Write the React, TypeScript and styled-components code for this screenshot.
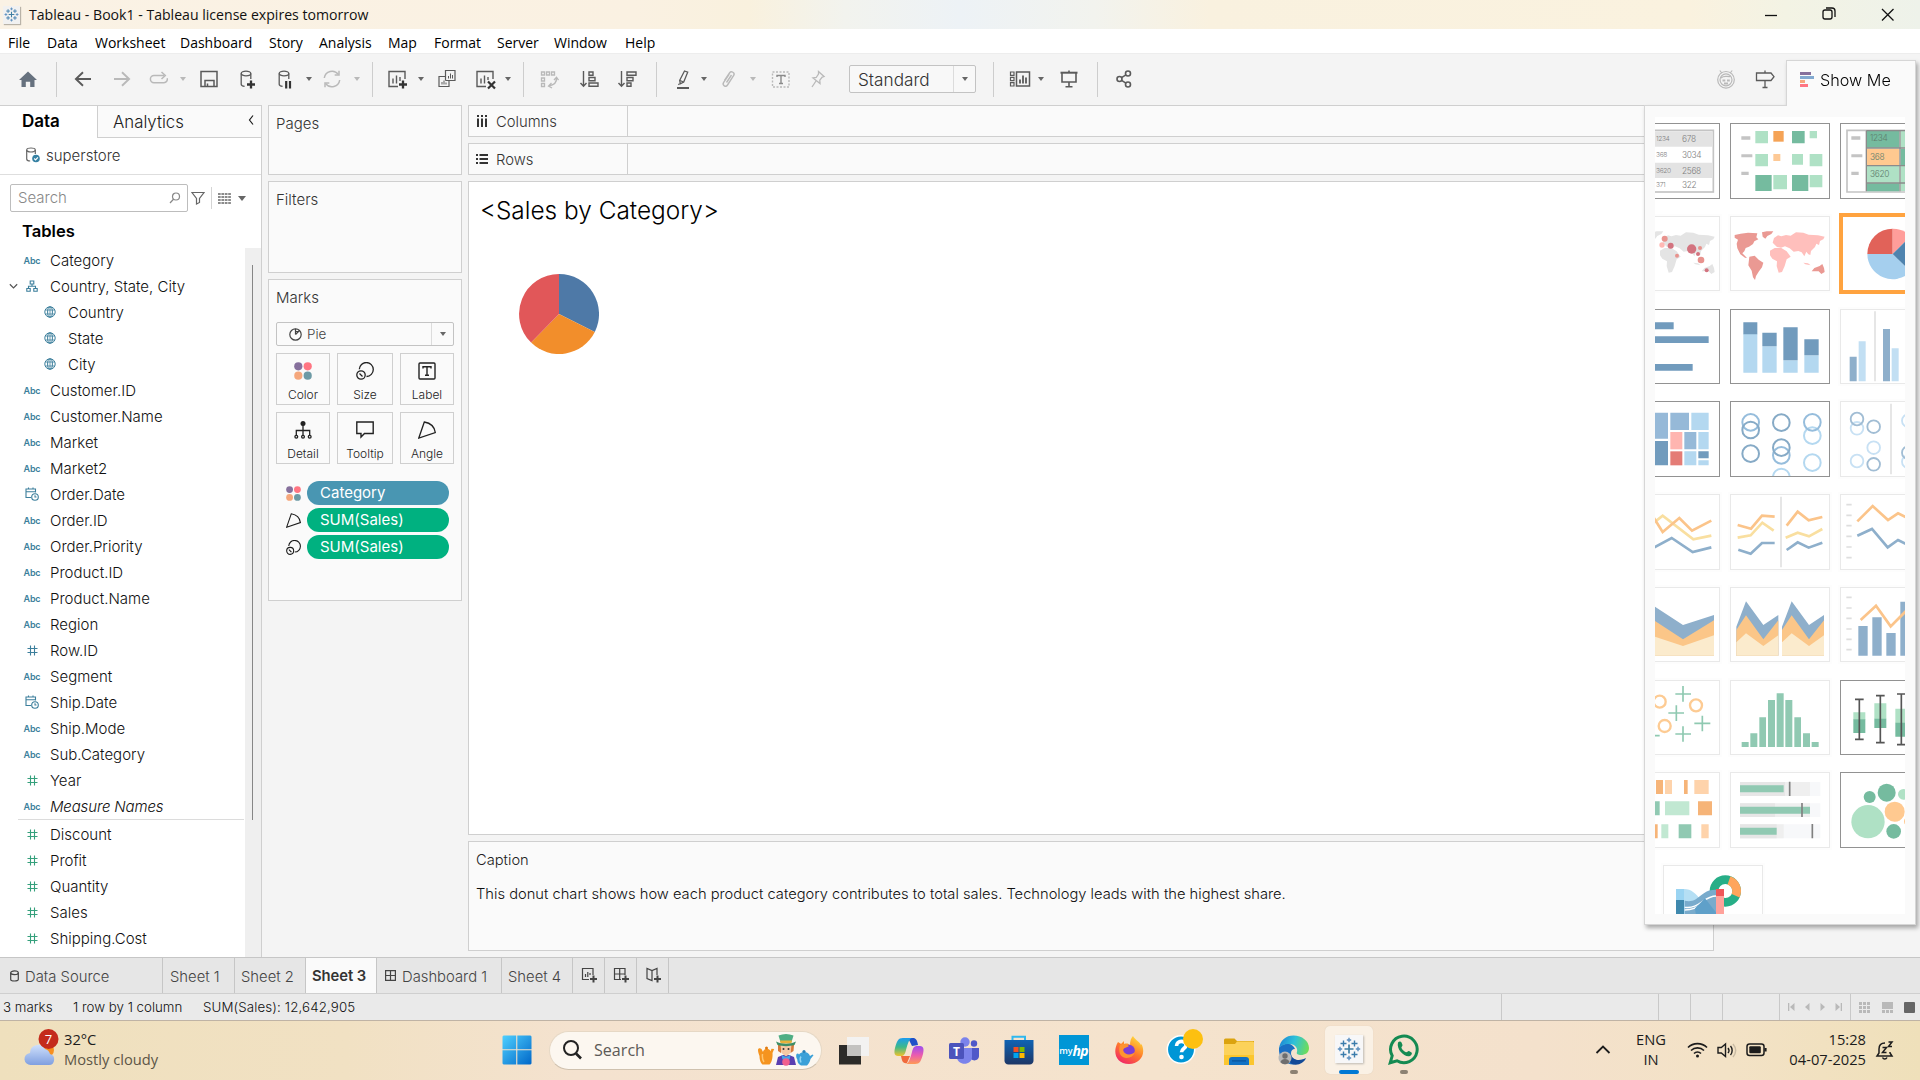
import React from "react";
import styled, { createGlobalStyle, css } from "styled-components";

const LINE = "#cfcfcf";
const APP_FONT = `Inter, "Open Sans", sans-serif`;
const OS_FONT = `"Open Sans", "Noto Sans", sans-serif`;

const GlobalStyle = createGlobalStyle`
  * { box-sizing: border-box; }
  body { margin: 0; background: #f4f4f4; overflow: hidden; }
  svg { display: block; flex: none; }
`;

/* ---------- Frame ---------- */

const Screen = styled.div`
  position: relative;
  width: 1920px;
  height: 1080px;
  display: flex;
  flex-direction: column;
  background: #f4f4f4;
  color: #1b1b1b;
  font-family: ${APP_FONT};
  font-weight: 300;
  white-space: nowrap;
  overflow: hidden;
`;

const TitleBar = styled.header`
  height: 29px;
  flex: none;
  display: flex;
  align-items: center;
  padding-left: 3px;
  background: linear-gradient(90deg, #faf2e5 0%, #faf1e2 33%, #f9f1de 39%, #f2f3ee 44%, #edf2f6 50%, #f2f3ee 57%, #f9f1df 63%, #faf2df 88%, #f3f3e4 93%, #eef2ea 100%);
  font-family: ${OS_FONT};
  font-weight: 400;
  font-size: 14.1px;
  color: #111;
`;

const AppBadge = styled.span`
  width: 17px;
  height: 18px;
  display: grid;
  place-items: center;
  margin-right: 9px;
  background: #f1f1f1;
  box-shadow: 1px 1px 1px #b9b3a8;
`;

const WindowButtons = styled.div`
  display: flex;
  margin-left: auto;
  padding-right: 20px;
  gap: 34px;
`;

const MenuBar = styled.nav`
  height: 25px;
  flex: none;
  display: flex;
  align-items: center;
  padding: 2px 0 0 8px;
  background: #fff;
  border-bottom: 1px solid #ededed;
  font-family: ${OS_FONT};
  font-weight: 400;
  font-size: 14px;
  color: #000;
`;

const MenuItem = styled.span<{ $w: number }>`
  width: ${(p) => p.$w}px;
`;

/* ---------- Toolbar ---------- */

const ToolBar = styled.div`
  height: 51px;
  flex: none;
  display: flex;
  align-items: center;
  padding: 0 143px 1px 0;
`;

const Tool = styled.span<{ $ml: number; $muted?: boolean }>`
  display: grid;
  place-items: center;
  width: 24px;
  height: 24px;
  flex: none;
  margin-left: ${(p) => p.$ml}px;
  color: ${(p) => (p.$muted ? "#b9b9b9" : "#5a5a5a")};
`;

const Caret = styled.span<{ $ml?: number; $muted?: boolean; $big?: boolean }>`
  width: 0;
  height: 0;
  flex: none;
  margin: 0 ${(p) => (p.$big ? 0 : 1)}px 0 ${(p) => (p.$ml ?? 0) + 1}px;
  border: ${(p) => (p.$big ? 4 : 3)}px solid transparent;
  border-top: ${(p) => (p.$big ? 5 : 4)}px solid ${(p) => (p.$muted ? "#b9b9b9" : "#666")};
  border-bottom: 0;
`;

const ToolDivider = styled.span<{ $ml: number }>`
  width: 1px;
  height: 35px;
  flex: none;
  margin-left: ${(p) => p.$ml}px;
  background: #cdcdcd;
`;

const FitSelect = styled.div`
  display: flex;
  align-items: center;
  width: 127px;
  height: 28px;
  flex: none;
  margin-left: 20px;
  padding-left: 8px;
  border: 1px solid #c3c3c3;
  border-radius: 2px;
  background: #f8f8f8;
  font-size: 17.2px;
  color: #333;
`;

const SelectArrow = styled.span<{ $w: number }>`
  display: grid;
  place-items: center;
  width: ${(p) => p.$w}px;
  height: 100%;
  margin-left: auto;
  border-left: 1px solid #dcdcdc;
`;

const ToolSpacer = styled.span`
  flex: 1;
`;

/* ---------- Work area ---------- */

const Work = styled.div`
  height: 852px;
  flex: none;
  display: flex;
`;

const DataPane = styled.aside`
  width: 262px;
  display: flex;
  flex-direction: column;
  background: #fff;
  border-top: 1px solid ${LINE};
  border-right: 1px solid ${LINE};
`;

const PaneTabs = styled.div`
  height: 32px;
  flex: none;
  display: flex;
`;

const DataTab = styled.div`
  width: 97px;
  padding: 3px 0 0 22px;
  font-size: 17px;
  font-weight: 600;
  line-height: 24px;
  color: #000;
`;

const AnalyticsTab = styled.div`
  flex: 1;
  display: flex;
  justify-content: space-between;
  padding: 4px 5px 0 15px;
  border-left: 1px solid ${LINE};
  border-bottom: 1px solid ${LINE};
  background: #fafafa;
  font-size: 16.8px;
  line-height: 24px;
  svg { margin-top: 5px; }
`;

const SourceRow = styled.div`
  height: 37px;
  flex: none;
  display: flex;
  align-items: center;
  gap: 5px;
  padding: 0 0 2px 26px;
  border-bottom: 1px solid #dedede;
  font-size: 15px;
  color: #333;
`;

const SearchRow = styled.div`
  display: flex;
  align-items: center;
  height: 28px;
  flex: none;
  margin-top: 9px;
  padding-left: 10px;
`;

const SearchField = styled.div`
  display: flex;
  align-items: center;
  justify-content: space-between;
  width: 178px;
  height: 28px;
  padding: 0 6px 1px 7px;
  border: 1px solid #bdbdbd;
  border-radius: 2px;
  font-size: 15px;
  color: #888;
`;

const SearchTools = styled.div`
  display: flex;
  align-items: center;
  gap: 6px;
  padding-left: 3px;
  color: #666;
`;

const ThinRule = styled.span`
  width: 1px;
  height: 22px;
  background: #d4d4d4;
`;

const TablesTitle = styled.h2`
  height: 36px;
  flex: none;
  margin: 0;
  padding: 7px 0 0 22px;
  font-size: 16.6px;
  font-weight: 600;
  line-height: 24px;
  color: #000;
`;

const ListArea = styled.div`
  flex: 1;
  display: flex;
  min-height: 0;
`;

const FieldList = styled.div`
  width: 245px;
  overflow: hidden;
`;

const ScrollTrack = styled.div`
  flex: 1;
  padding: 17px 0 0 7px;
  background: #efefef;
`;

const ScrollThumb = styled.div`
  width: 1px;
  height: 555px;
  background: #868686;
`;

const FieldRow = styled.div<{ $nested?: boolean; $italic?: boolean }>`
  display: flex;
  align-items: center;
  height: 26px;
  padding: 0 0 2px ${(p) => (p.$nested ? 26 : 8)}px;
  font-size: 15px;
  font-style: ${(p) => (p.$italic ? "italic" : "normal")};
  letter-spacing: ${(p) => (p.$italic ? "-0.15px" : "0")};
  color: #111;
`;

const Expander = styled.span`
  width: 14px;
  color: #555;
`;

const FieldIcon = styled.span<{ $measure?: boolean }>`
  display: flex;
  justify-content: center;
  width: 20px;
  margin-right: 8px;
  font-size: 9px;
  font-weight: 600;
  font-style: normal;
  letter-spacing: -0.2px;
  color: ${(p) => (p.$measure ? "#35a07c" : "#3c7f9c")};
`;

const FieldRule = styled.div`
  height: 1px;
  margin: -1px 1px 2px 18px;
  background: #dcdcdc;
`;

/* ---------- Cards ---------- */

const CardColumn = styled.div`
  display: flex;
  flex-direction: column;
  gap: 6px;
  width: 194px;
  margin-left: 6px;
`;

const Card = styled.section<{ $h: number }>`
  height: ${(p) => p.$h}px;
  padding: 0 7px;
  border: 1px solid ${LINE};
  background: #fafafa;
`;

const CardTitle = styled.div`
  padding-top: 6px;
  font-size: 15px;
  line-height: 24px;
  color: #333;
`;

const MarkSelect = styled.div`
  display: flex;
  align-items: center;
  gap: 5px;
  height: 24px;
  margin-top: 12px;
  padding-left: 12px;
  border: 1px solid #c3c3c3;
  border-radius: 2px;
  font-size: 13.4px;
  color: #444;
`;

const MarkGrid = styled.div`
  display: grid;
  grid-template-columns: 54px 56px 54px;
  grid-auto-rows: 52px;
  gap: 7px;
  margin-top: 7px;
`;

const MarkButton = styled.div`
  display: flex;
  flex-direction: column;
  align-items: center;
  justify-content: space-between;
  padding: 8px 0 1px;
  border: 1px solid ${LINE};
  font-size: 12px;
  line-height: 17px;
  color: #222;
`;

const PillList = styled.div`
  display: flex;
  flex-direction: column;
  gap: 3px;
  margin-top: 17px;
`;

const PillRow = styled.div`
  display: flex;
  align-items: center;
  gap: 6px;
  padding-left: 10px;
`;

const Pill = styled.span<{ $measure?: boolean }>`
  width: 142px;
  height: 24px;
  padding-left: 13px;
  border-radius: 12px;
  background: ${(p) => (p.$measure ? "#00b180" : "#4996b2")};
  font-size: 15px;
  font-weight: 400;
  line-height: 23px;
  color: #fff;
`;

/* ---------- Sheet ---------- */

const SheetColumn = styled.main`
  display: flex;
  flex-direction: column;
  gap: 6px;
  width: 1246px;
  margin-left: 6px;
`;

const Shelf = styled.div`
  display: flex;
  height: 32px;
  border: 1px solid ${LINE};
  background: #fafafa;
`;

const ShelfLabel = styled.div`
  display: flex;
  align-items: center;
  gap: 8px;
  width: 159px;
  padding: 2px 0 0 7px;
  border-right: 1px solid ${LINE};
  font-size: 14.8px;
  color: #333;
  svg { margin-top: -2px; }
`;

const Canvas = styled.div`
  height: 654px;
  padding: 13px 0 0 11px;
  border: 1px solid ${LINE};
  background: #fff;
`;

const SheetTitle = styled.h1`
  margin: 0 0 49px;
  font-size: 24.4px;
  font-weight: 300;
  line-height: 30px;
  color: #000;
`;

const PieHolder = styled.div`
  padding-left: 39px;
`;

const Caption = styled.div`
  height: 110px;
  padding: 6px 7px;
  border: 1px solid ${LINE};
  background: #fafafa;
  font-size: 14.7px;
  line-height: 24px;
  color: #222;
`;

const CaptionText = styled.p`
  margin: 10px 0 0;
  color: #111;
`;

/* ---------- Show Me ---------- */

const ShowMe = styled.div`
  position: absolute;
  top: 60px;
  right: 4px;
  display: flex;
  flex-direction: column;
  align-items: flex-end;
  filter: drop-shadow(2px 3px 2px rgba(0, 0, 0, 0.32));
`;

const ShowMeTab = styled.div`
  z-index: 1;
  display: flex;
  align-items: center;
  gap: 6px;
  width: 130px;
  height: 46px;
  margin-bottom: -1px;
  padding: 0 0 8px 13px;
  border: 1px solid #d6d6d6;
  border-bottom: 0;
  background: #fafafa;
  font-size: 16.2px;
  color: #000;
`;

const ShowMeBody = styled.div`
  width: 272px;
  height: 820px;
  padding: 11px 0 0 10px;
  border: 1px solid #d6d6d6;
  background: #fafafa;
`;

const ShowMeView = styled.div`
  width: 250px;
  height: 797px;
  overflow: hidden;
  background: #fff;
`;

const TileGrid = styled.div`
  display: grid;
  grid-template-columns: repeat(3, 100px);
  grid-auto-rows: 75.5px;
  gap: 17.25px 10px;
  width: 320px;
  margin: 6px 0 17.25px -35px;
`;

const Tile = styled.div<{ $state: "on" | "off" | "picked" }>`
  overflow: hidden;
  border: 1px solid ${(p) => (p.$state === "on" ? "#929292" : "#e9e9e9")};
  ${(p) =>
    p.$state === "off" &&
    css`
      box-shadow: 0 0 0 2px #fdfdfd;
    `}
  ${(p) =>
    p.$state === "picked" &&
    css`
      margin: -3px -1px;
      padding: 0;
      border: 4px solid #ffa33f;
    `}
  svg { margin: ${(p) => (p.$state === "picked" ? "-1px 0 0 -3px" : "-1px 0 0 -1px")}; }
`;

const MoreTile = styled(Tile)`
  width: 100px;
  height: 76px;
  margin-left: 8px;
`;

/* ---------- Sheet tabs and status ---------- */

const SheetTabs = styled.div`
  height: 37px;
  flex: none;
  display: flex;
  border-top: 1px solid #c6c6c6;
  border-bottom: 1px solid #cfcfcf;
  background: #e6e6e6;
`;

const SheetTab = styled.div<{ $w: number; $active?: boolean; $pad?: number }>`
  display: flex;
  align-items: center;
  gap: 6px;
  width: ${(p) => p.$w}px;
  padding: ${(p) => (p.$active ? 0 : 2)}px 0 0 ${(p) => p.$pad ?? 6}px;
  border-right: 1px solid #c6c6c6;
  background: ${(p) => (p.$active ? "#fafafa" : "transparent")};
  font-size: 14.8px;
  font-weight: ${(p) => (p.$active ? 600 : 300)};
  letter-spacing: ${(p) => (p.$active ? "-0.05px" : "0")};
  color: ${(p) => (p.$active ? "#333" : "#444")};
  svg { margin-top: -2px; }
`;

const StatusBar = styled.div`
  height: 26px;
  flex: none;
  display: flex;
  align-items: center;
  padding-left: 3px;
  background: #eaeaea;
  font-size: 13.3px;
  color: #111;
`;

const StatusItem = styled.span<{ $w: number; $wide?: boolean }>`
  width: ${(p) => p.$w}px;
  letter-spacing: ${(p) => (p.$wide ? "0.13px" : "0")};
`;

const StatusCells = styled.div`
  display: flex;
  height: 100%;
  margin-left: auto;
`;

const StatusCell = styled.div<{ $w: number }>`
  display: flex;
  align-items: center;
  justify-content: space-around;
  width: ${(p) => p.$w}px;
  padding: 0 3px;
  border-left: 1px solid #c9c9c9;
  color: #b9b9b9;
`;

const ViewModes = styled(StatusCell)`
  justify-content: space-between;
  padding: 0 5px 0 8px;
`;

/* ---------- Taskbar ---------- */

const Taskbar = styled.footer`
  height: 60px;
  flex: none;
  display: flex;
  align-items: center;
  padding-bottom: 1px;
  border-top: 1px solid #bfb3a5;
  background: linear-gradient(90deg, #efe0bd 0%, #f1e1c3 18%, #f4e2cf 30%, #f5e3cd 60%, #f4e1cc 80%, #f3e2c6 90%, #efe0ba 100%);
  font-family: ${OS_FONT};
  font-weight: 400;
  font-size: 14.7px;
  color: #1c1c1c;
`;

const Weather = styled.div`
  display: flex;
  align-items: center;
  gap: 5px;
  width: 502px;
  padding: 0 0 3px 23px;
  line-height: 20px;
`;

const Muted = styled.div`
  color: #5d5647;
`;

const TaskSearch = styled.div`
  display: flex;
  align-items: center;
  width: 273px;
  height: 39px;
  margin: 0 5px 0 17px;
  padding: 0 7px 0 13px;
  border: 1px solid #e6d8c5;
  border-bottom-color: #cfc1ae;
  border-radius: 20px;
  background: #fcf7f0;
  font-size: 16.1px;
  color: #5c5a57;
`;

const SearchWord = styled.span`
  margin: 0 auto 0 12px;
`;

const TaskCell = styled.div<{ $mark?: "idle" | "active" }>`
  display: flex;
  flex-direction: column;
  align-items: center;
  justify-content: flex-end;
  gap: ${(p) => (p.$mark ? 5 : 0)}px;
  width: 55px;
  height: 48px;
  margin-left: ${(p) => (p.$mark === "active" ? 0 : 0)}px;
  padding-bottom: ${(p) => (p.$mark ? 0 : 9)}px;
`;

const Apps = styled.div`
  display: flex;
  margin-left: -1px;
`;

const ActivePlate = styled.div`
  display: flex;
  flex-direction: column;
  align-items: center;
  gap: 7px;
  width: 48px;
  height: 48px;
  padding-top: 9px;
  border-radius: 5px;
  background: #faf1e5;
  box-shadow: 0 0 1px #d8c8b3;
`;

const LogoPlate = styled.div`
  display: grid;
  place-items: center;
  width: 28px;
  height: 28px;
  background: #f7f7f8;
  box-shadow: 1px 1px 2px #bdb9b2;
`;

const RunMark = styled.span<{ $active?: boolean }>`
  width: ${(p) => (p.$active ? 20 : 8)}px;
  height: 4px;
  border-radius: 2px;
  background: ${(p) => (p.$active ? "#0078d4" : "#8c8173")};
`;

const HpPlate = styled.div`
  display: flex;
  align-items: center;
  justify-content: center;
  width: 30px;
  height: 30px;
  background: #0096d6;
  font-size: 9px;
  font-weight: 600;
  color: #fff;
  i { font-size: 14px; font-weight: 700; letter-spacing: -0.8px; }
`;

const Tray = styled.div`
  display: flex;
  align-items: center;
  margin-left: auto;
  padding-right: 25px;
  line-height: 20px;
`;

const Language = styled.div`
  width: 48px;
  margin: 0 12px 3px 16px;
  text-align: center;
`;

const TrayIcons = styled.div`
  display: flex;
  align-items: center;
  gap: 9px;
  padding-bottom: 1px;
`;

const Clock = styled.div`
  width: 99px;
  margin: 0 9px 3px 0;
  text-align: right;
`;

/* ---------- Icons ---------- */

const Line: React.FC<{ s?: number; h?: number; w?: number; children: React.ReactNode; v?: string }> = ({ s = 24, h, w = 1.5, children, v }) => (
  <svg width={s} height={h ?? s} viewBox={v ?? "0 0 24 24"} fill="none" stroke="currentColor" strokeWidth={w}>
    {children}
  </svg>
);

const TableauMark = ({ size }: { size: number }) => (
  <svg width={size} height={size} viewBox="0 0 24 24" fill="none" strokeWidth="1.4">
    <path d="M12 7.5v9M7.5 12h9" stroke="#3f7fa3" strokeWidth="1.7" />
    <path d="M6.5 3.5v6M3.5 6.5h6M17.5 3.5v6M14.5 6.5h6M6.5 14.5v6M3.5 17.5h6M17.5 14.5v6M14.5 17.5h6" stroke="#3b7cab" />
    <path d="M12 .8v4.4M9.8 3h4.4M12 18.8v4.4M9.8 21h4.4M3 9.8v4.4M.8 12h4.4M21 9.8v4.4M18.8 12h4.4" stroke="#5b8fbf" />
  </svg>
);

const HomeIcon = () => (
  <svg width="24" height="24" viewBox="0 0 24 24" fill="#66717e"><path d="M12 4.5l9 8.5h-2.5v7h-4.3v-5.2H9.8V20H5.5v-7H3z" /></svg>
);
const BackIcon = () => <Line w={1.9}><path d="M20 12H5M12 5.3L4.9 12l7.1 6.7" /></Line>;
const ForwardIcon = () => <Line w={1.9}><path d="M4 12h15M12 5.3l7.1 6.7-7.1 6.7" /></Line>;
const ReplayIcon = () => (
  <Line><path d="M17 8.5H7a3.6 3.6 0 0 0 0 7.2h10a3.4 3.4 0 0 0 3.2-4.4" /><path d="M14.5 5l3.8 3.5-3.8 3.5" /></Line>
);
const SaveIcon = () => <Line><path d="M4 4.5h16v15H4z" /><path d="M8 19.5v-6h9v6M10.5 16.5v3" /></Line>;
const Cylinder = () => (
  <><ellipse cx="10" cy="6.5" rx="4.8" ry="2.3" /><path d="M5.2 6.5v10.7c0 1 1.4 1.9 3.4 2.2M14.8 6.5V12" /></>
);
const AddDataIcon = () => <Line w={1.3}><Cylinder /><path d="M15 13.5v8M11 17.5h8" stroke="#333" strokeWidth="2.3" /></Line>;
const PauseDataIcon = () => <Line w={1.3}><Cylinder /><path d="M12.2 14v7.5M16 14v7.5" stroke="#333" strokeWidth="2.2" /></Line>;
const RefreshIcon = () => (
  <Line><path d="M4.3 11a7.8 7.8 0 0 1 14-3.6M19.7 13a7.8 7.8 0 0 1-14 3.6" /><path d="M19 3.8V8h-4.3M5 20.2V16h4.3" /></Line>
);
const NewSheetIcon = () => (
  <Line w={1.4}><path d="M20 12V4.5H4v15h9" /><path d="M8 16.5v-5M11.5 16.5v-8M15 14v-4" /><path d="M18 13.5v8M14 17.500h8" stroke="#333" strokeWidth="2.3" /></Line>
);
const DuplicateIcon = () => (
  <Line w={1.2}><path d="M10.5 13.500v-10H20v10h-9.500M10.500 9.500H4v10h10v-6" /><path d="M13.500 11.500V9M15.500 11.500V6.500M17.500 11.500V8M7 17.500V15M9 17.500v-4M11 17.500v-2" strokeWidth="1" /></Line>
);
const ClearIcon = () => (
  <Line w={1.4}><path d="M20 12V4.5H4v15h9" /><path d="M8 16.5v-5M11.5 16.5v-8M15 13v-3" /><path d="M15 14.5l7 7M22 14.5l-7 7" stroke="#333" strokeWidth="2.2" /></Line>
);
const SwapIcon = () => (
  <Line w={1.3}><path d="M4.5 5h3v3h-3zM9.5 5h3v3h-3zM14.5 5h3v3h-3zM4.5 11h3v3h-3zM4.5 16.5h3v3h-3z" /><path d="M19.5 10.5c.5 4.5-2 7.5-8 8.5M17 13l2.500-2.800 2 3M14.500 16l-3 3 3.500 2" /></Line>
);
const SortAscIcon = () => (
  <Line w={1.4}><path d="M5.5 4v15M2.5 16l3 3.3 3-3.3" /><path d="M11 5h4v3.3h-4zM11 10.5h6v3.300h-6zM11 16h9v3.300h-9z" /></Line>
);
const SortDescIcon = () => (
  <Line w={1.4}><path d="M5.5 4v15M2.5 16l3 3.3 3-3.3" /><path d="M11 5h9v3.3h-9zM11 10.5h6v3.300h-6zM11 16h4v3.300h-4z" /></Line>
);
const HighlightIcon = () => (
  <Line w={1.3}><path d="M13.5 4l3.200 1.200-4 9.800-3.400 1.800-.6-3.500z" /><path d="M9 13.500l3.500 1.500M8.500 16.500l-1 1.500" /><path d="M6 21h12" strokeWidth="2" /></Line>
);
const ClipIcon = () => (
  <Line w={1.4}><path d="M7.5 13.500l5-7.500c1.800-2.500 5.800-.3 4.200 2.500L10.500 18c-1.700 2.500-5.500.4-4-2.300l5.800-8.500M9.500 15.500l5-7.500" /></Line>
);
const TextBoxIcon = () => (
  <Line w={1.4}><path d="M3.5 5H20v15H3.500z" strokeDasharray="2 1.500" /><path d="M8 10V8.500h8V10M12 8.500v8M10 16.500h4" stroke="#8a8a8a" /></Line>
);
const PinIcon = () => <Line w={1.3}><path d="M13.5 4.500l5.500 5-1.800.5-2.400 3.200.2 3.300-7-5.500 3.200-.5 2.300-3.500zM11 14l-4 6" /></Line>;
const CardsIcon = () => (
  <Line w={1.5}><path d="M8.500 5h13v14h-13z" /><path d="M2.500 5H6v3.300H2.500zM2.500 10.300H6v3.300H2.500zM2.500 15.700H6V19H2.500z" strokeWidth="1.2" /><path d="M12 16.500v-4M15 16.500v-8M18 16.500v-6" strokeWidth="1.8" /></Line>
);
const PresentIcon = () => <Line w={1.6}><path d="M3.500 5.700h17" strokeWidth="2" /><path d="M5 6v9h14V6M12 15v4.500M8.500 19.700h7M12 3.500v2" /></Line>;
const ShareIcon = () => (
  <Line w={1.6}><circle cx="7.500" cy="12" r="2.500" /><circle cx="16" cy="6.500" r="2.500" /><circle cx="16" cy="17.500" r="2.500" /><path d="M9.600 10.600l4.300-2.800M9.600 13.400l4.300 2.800" /></Line>
);
const GuideIcon = () => (
  <Line w={1.2}><circle cx="12" cy="12.800" r="8.300" /><circle cx="12" cy="12.800" r="6" /><path d="M5.800 3.500l2 2.500M18.200 3.500l-2 2.500" /><path d="M7 11c3-3 6-1 9.500-1.500" /><path d="M8.500 13.500h2.800M13 13.500h2.800M10 16.500h4" strokeWidth="2" /></Line>
);
const SignIcon = () => <Line w={1.3}><path d="M3.500 6H18l3 3.700-3 3.800H3.500zM12 3.500V6M12 13.500v7M9.500 20.500h5" /></Line>;

const ShowMeBars = () => (
  <svg width="14" height="15" viewBox="0 0 14 15">
    <path fill="#86709c" d="M0 0h11v3H0z" /><path fill="#82a9d0" d="M0 4h14v3H0z" /><path fill="#f5a77c" d="M0 8h5v3H0z" /><path fill="#ff7582" d="M0 12h8v3H0z" />
  </svg>
);

const SourceIcon = () => (
  <svg width="15" height="16" viewBox="0 0 15 16" fill="none" stroke="#666" strokeWidth="1.2">
    <ellipse cx="5" cy="3" rx="4.300" ry="2" /><path d="M.7 3v9c0 1.300 1.800 2 3.500 2M9.300 3v4" />
    <circle cx="10" cy="11.500" r="3.800" fill="#3681a3" stroke="none" /><path d="M8.200 11.500l1.400 1.400 2.300-2.600" stroke="#fff" />
  </svg>
);
const Magnifier = () => <Line s={12} w={1.2} v="0 0 12 12"><circle cx="7" cy="4.500" r="3.500" /><path d="M4.700 7L1 11" /></Line>;
const FunnelIcon = () => <Line s={14} w={1.2} v="0 0 14 14"><path d="M1 1.500h12L8.500 7.500v4l-3 1.500V7.500z" /></Line>;
const ListIcon = () => (
  <Line s={13} w={1.3} v="0 0 13 13"><path d="M0 2h13M0 5h13M0 8h13M0 11h13" strokeDasharray="2.700 .7" /></Line>
);
const GlobeIcon = () => (
  <Line s={12} w={1} v="0 0 12 12"><circle cx="6" cy="6" r="5.200" /><ellipse cx="6" cy="6" rx="2.400" ry="5.200" /><path d="M1.300 4h9.400M1.300 8h9.400M6 1v10" strokeWidth=".8" /></Line>
);
const HashIcon = () => <Line s={11} w={1.1} v="0 0 11 11"><path d="M3.500.5v10M7.500.5v10M.5 3.500h10M.5 7.500h10" /></Line>;
const CalendarIcon = () => (
  <Line s={14} w={1.1} v="0 0 14 14"><path d="M6 10.500H1V2h9.500v3.500M1 4.700h9.500M3.500.5v2M8 .5v2" /><circle cx="10" cy="10" r="3.300" /><path d="M10 8.300V10h1.500" /></Line>
);
const TreeIcon = () => (
  <Line s={12} w={1.1} v="0 0 12 12"><path d="M4.200 1h3.600v3H4.200zM.8 8.500h3.400v2.700H.8zM7.800 8.500h3.400v2.700H7.800zM6 4v2.300M2.500 8.500V6.300h7v2.200" /></Line>
);

const ColorDots = ({ size }: { size: number }) => (
  <svg width={size} height={size} viewBox="0 0 18 18">
    <circle cx="4.300" cy="4.300" r="4.100" fill="#86709c" /><circle cx="13.700" cy="4.300" r="4.100" fill="#ff7582" />
    <circle cx="4.300" cy="13.700" r="4.100" fill="#f5a77c" /><circle cx="13.700" cy="13.700" r="4.100" fill="#6d9aa5" />
  </svg>
);
const SizeGlyph = ({ size }: { size: number }) => (
  <Line s={size} w={1.3} v="0 0 18 18"><path d="M3.300 7.200A7 7 0 1 1 10.500 14.500" /><circle cx="5" cy="13" r="4.200" /><path d="M3.500 11.500l3 3" /></Line>
);
const AngleGlyph = ({ size }: { size: number }) => <Line s={size} w={1.3} v="0 0 18 18"><path d="M6.300 1L.8 17 17.300 11.500C16.500 5.500 12 2 6.300 1z" /></Line>;
const LabelGlyph = () => <Line s={18} w={1.4} v="0 0 18 18"><rect x="1" y="1" width="16" height="16" rx="1" /><path d="M5 6.500V4.700h8v1.800M9 4.700v8.600M7 13.300h4" /></Line>;
const DetailGlyph = () => (
  <Line s={18} w={1.3} v="0 0 18 18"><circle cx="9" cy="2.500" r="2.500" fill="currentColor" stroke="none" /><path d="M9 4v10M2.300 14V9.500h13.400V14" /><circle cx="2.300" cy="15.700" r="1.400" /><circle cx="9" cy="15.700" r="1.400" /><circle cx="15.700" cy="15.700" r="1.400" /></Line>
);
const TooltipGlyph = () => <Line s={18} w={1.4} v="0 0 18 18"><path d="M.8 1h16.400v11.500H8.500L5 16v-3.500H.8z" /></Line>;
const PieGlyph = () => <Line s={13} w={1.2} v="0 0 13 13"><circle cx="6.500" cy="6.500" r="5.700" /><path d="M6.500 6.500V.8M6.500 6.500l4-4M6.500 3.500h3" /></Line>;

/* ---------- Show Me thumbnails ---------- */

const Thumb = ({ x, y, children }: { x: number; y: number; children: React.ReactNode }) => (
  <svg width="100" height="75.5" viewBox={`${x} ${y} 300 226.5`} fill="none">{children}</svg>
);

const MAP = {
  america: "M284 405l18-4 22-3 28 2-3 12 6 6-12 6-4 8-12 8-10 4-4 10-6 6 6 6 8 8-6-1-14-10-9-18-2-14 4-12-10-6zM366 397l14-3h20l-6 8-12 6-6 8-8-6zM328 470l16-3 12 12 14 9-4 14-9 12-9 14-3 12-6-8-4-20-10-16z",
  world: "M398 428l4-14 12-8 10 3 14-4 14 2 16-10 22 1 16 6 28 2 20 4-4 8-10 5-3 12-8-4-4 10-12 12-2 12-6-2-6-8-6 14-8-12-10-4-14 2-12-10-14-6-12 4-12-2zM390 452l14-8h20l16 10 12 16-12 8-6 20-8 18-10 2-6-20 1-14-14-8-7-10zM490 488l14 2 8 6-16-3z",
  australia: "M515 514l8-10 16-6 8-6 5 12 2 12-10 6-8-8z",
};

const thumbs: { state: "on" | "off" | "picked"; art: React.ReactNode }[] = [
  { state: "on", art: (
    <Thumb x={-60} y={69}>
      <rect x="-40" y="91" width="260" height="185" fill="#fff" stroke="#c4c4c4" strokeWidth="5" />
      <path fill="#e3e3e3" d="M-38 94h255v46H-38zM-38 188h255v46H-38z" />
      <g fill="#808080" fontFamily="Inter" fontSize="20" fontWeight="300" letterSpacing="-1.2">
        <text x="48" y="124">1234</text><text x="48" y="172">368</text><text x="48" y="219">3620</text><text x="48" y="261">371</text>
      </g>
      <g fill="#808080" fontFamily="Inter" fontSize="25" fontWeight="300" letterSpacing="-1">
        <text x="126" y="126">678</text><text x="126" y="174">3034</text><text x="126" y="221">2568</text><text x="126" y="264">322</text>
      </g>
    </Thumb>) },
  { state: "on", art: (
    <Thumb x={270} y={69}>
      <path fill="#c4c4c4" d="M304 109h27v10h-27zM304 163h33v9h-33zM304 215h22v10h-22z" />
      <path fill="#afe1c5" d="M346 93h38v37h-38zM509 93h22v22h-22zM346 162h38v37h-38zM456 162h33v32h-33zM509 162h38v37h-38zM400 225h41v43h-41zM509 225h38v37h-38z" />
      <path fill="#75bb9f" d="M456 93h38v37h-38zM346 225h49v48h-49zM456 225h49v48h-49z" />
      <path fill="#f5a356" d="M400 93h31v32h-31z" /><path fill="#fdc996" d="M400 162h21v21h-21z" />
    </Thumb>) },
  { state: "on", art: (
    <Thumb x={600} y={69}>
      <path fill="#fff" stroke="#c4c4c4" strokeWidth="5" d="M621 91h260v185H621z" />
      <path fill="#75bb9f" d="M680 93h98v50h-98zM680 250h98v24h-98zM782 146h98v50h-98z" /><path fill="#afe1c5" d="M680 198h98v50h-98zM782 93h98v50h-98zM782 198h98v75h-98z" /><path fill="#ffc990" d="M680 146h98v50h-98z" />
      <path stroke="#8b8b8b" strokeWidth="4" d="M679 92v182M780 92v182M679 92h120M679 144h120M679 197h120M679 249h120" />
      <path fill="#c4c4c4" d="M634 109h27v10h-27zM634 163h33v9h-33zM634 215h22v10h-22z" />
      <g fill="#5e7d6c" fontFamily="Inter" fontSize="25" fontWeight="300" letterSpacing="-1"><text x="690" y="124">1234</text><text x="690" y="179">368</text><text x="690" y="231">3620</text></g>
    </Thumb>) },
  { state: "off", art: (
    <Thumb x={-60} y={348}>
      <g fill="#e4e4e4" transform="translate(-330 0)"><path d={MAP.america} /><path d={MAP.world} /><path d={MAP.australia} /></g>
      <g fill="#e8938e"><circle cx="74" cy="416" r="9" /><circle cx="111" cy="467" r="6" /><circle cx="180" cy="444" r="6" /><circle cx="183" cy="480" r="10" /></g>
      <circle cx="66" cy="435" r="8" fill="#ffb9b5" />
      <g fill="#d3737f"><circle cx="92" cy="437" r="9" /><circle cx="155" cy="447" r="14" /><circle cx="174" cy="462" r="6" /><circle cx="200" cy="511" r="6" /></g>
    </Thumb>) },
  { state: "off", art: (
    <Thumb x={270} y={348}>
      <path fill="#ea9993" d={MAP.america} /><path fill="#ffbfbc" d={MAP.world} /><path fill="#ea9993" d={MAP.australia} />
    </Thumb>) },
  { state: "picked", art: (
    <Thumb x={600} y={348}>
      <path fill="#a5cfee" d="M758 462h-76a76 76 0 0 0 130 53z" /><path fill="#e16259" d="M758 462h-76a76 76 0 0 1 76-76z" />
      <path fill="#ff9d9a" d="M758 462v-76a76 76 0 0 1 54 22z" /><path fill="#4e83ae" d="M758 462l54-54v107z" />
    </Thumb>) },
  { state: "on", art: <Thumb x={-60} y={627}><path fill="#719bbd" d="M-30 667h131v21H-30zM-30 709h236v20H-30zM-30 792h188v20H-30z" /></Thumb> },
  { state: "on", art: (
    <Thumb x={270} y={627}>
      <path fill="#b4d8f0" d="M310 702h42v116h-42zM367 739h43v79h-43zM430 781h43v37h-43zM493 766h43v52h-43z" />
      <path fill="#719bbd" d="M310 667h42v36h-42zM367 698h43v41h-43zM430 682h43v99h-43zM493 718h43v48h-43z" />
    </Thumb>) },
  { state: "off", art: (
    <Thumb x={600} y={627}>
      <path fill="#e6e6e6" d="M702 634h6v210h-6z" /><path fill="#8eafcb" d="M629 770h21v74h-21zM729 687h21v157h-21z" /><path fill="#c2dff3" d="M656 724h21v120h-21zM755 745h21v99h-21z" />
    </Thumb>) },
  { state: "on", art: (
    <Thumb x={-60} y={903}>
      <path fill="#96b9d8" d="M-30 938h114v78H-30zM91 938h56v52H91zM133 996h36v52h-36z" /><path fill="#719bbd" d="M-30 1023h114v73H-30zM175 1054h31v21h-31z" />
      <path fill="#b4d8f0" d="M154 938h52v52h-52zM175 996h31v52h-31zM133 1054h36v42h-36zM175 1081h31v15h-31z" /><path fill="#ffb5b0" d="M91 996h36v52H91z" /><path fill="#e47c76" d="M91 1054h36v42H91z" />
    </Thumb>) },
  { state: "on", art: (
    <Thumb x={270} y={903}>
      <g strokeWidth="6" stroke="#b4d8f0"><circle cx="517" cy="1007" r="25" /><circle cx="517" cy="1088" r="25" /><circle cx="424" cy="1131" r="25" /></g>
      <g strokeWidth="6" stroke="#96bddc"><circle cx="332" cy="967" r="25" /><circle cx="424" cy="1066" r="25" /><circle cx="517" cy="967" r="25" /></g>
      <g strokeWidth="6" stroke="#86aac6"><circle cx="332" cy="990" r="25" /><circle cx="332" cy="1061" r="25" /><circle cx="424" cy="968" r="25" /><circle cx="424" cy="1043" r="25" /></g>
    </Thumb>) },
  { state: "off", art: (
    <Thumb x={600} y={903}>
      <path fill="#e6e6e6" d="M750 911h6v212h-6z" />
      <g strokeWidth="5.5" stroke="#c8e1f4"><circle cx="651" cy="985" r="19" /><circle cx="651" cy="1083" r="19" /><circle cx="701" cy="1043" r="19" /><circle cx="805" cy="962" r="19" /><circle cx="805" cy="1085" r="19" /></g>
      <g strokeWidth="5.5" stroke="#a1bdd4"><circle cx="651" cy="957" r="19" /><circle cx="701" cy="980" r="19" /><circle cx="701" cy="1093" r="19" /><circle cx="805" cy="1058" r="19" /></g>
    </Thumb>) },
  { state: "off", art: (
    <Thumb x={-60} y={42}>
      <g strokeWidth="8"><path stroke="#f9dfa0" d="M30 137l38-30 92 71 54-11" /><path stroke="#fbc48a" d="M20 80l48 76 50-42 38 38 58-30" /><path stroke="#8eafcb" d="M20 214l75-40 63 42 56-14" /></g>
    </Thumb>) },
  { state: "off", art: (
    <Thumb x={270} y={42}>
      <path fill="#e6e6e6" d="M420 50h6v212h-6z" />
      <g strokeWidth="8"><path stroke="#f9dfa0" d="M293 173l39-7 35-38 34 24M437 173l36-15 34 11 40-22" /><path stroke="#fbc48a" d="M293 135l40 11 33-39 38 3M440 137l33-42 33 26 41-10" /><path stroke="#8eafcb" d="M295 209l37 12 34-32h38M440 210l33-23 33 16 41-15" /></g>
    </Thumb>) },
  { state: "off", art: (
    <Thumb x={600} y={42}>
      <path stroke="#dedede" strokeWidth="5" d="M619 74h16M619 106h16M619 137h16M619 169h16M619 201h16M619 233h16" />
      <g strokeWidth="8"><path stroke="#fbc48a" d="M652 124l46-46 46 42 30-20 40 20" /><path stroke="#8eafcb" d="M652 167l44-20 47 55 31-22 40 20" /></g>
    </Thumb>) },
  { state: "off", art: (
    <Thumb x={-60} y={321}>
      <path fill="#8eafcb" d="M-20 340l65 40 84 55 93-30V527H-20z" /><path fill="#fbc688" d="M-20 385l65 38 84 55 93-57V527H-20z" /><path fill="#fbebcd" d="M-20 450l65 20 84 28 93-32V527H-20z" />
    </Thumb>) },
  { state: "off", art: (
    <Thumb x={270} y={321}>
      {[0, 137].map((dx) => (
        <g key={dx} transform={`translate(${dx} 0)`}>
          <path fill="#8eafcb" d="M289 440l29-76 52 71 45-30V527H289z" /><path fill="#fbc688" d="M289 450l29-44 52 72 45-57V527H289z" /><path fill="#fbebcd" d="M289 487l29-27 52 38 45-32V527H289z" />
        </g>
      ))}
    </Thumb>) },
  { state: "off", art: (
    <Thumb x={600} y={321}>
      <path stroke="#dedede" strokeWidth="5" d="M619 352h16M619 384h16M619 415h16M619 447h16M619 478h16M619 509h16" />
      <path fill="#8eafcb" d="M655 438h28v89h-28zM697 412h28v115h-28zM739 459h28v68h-28zM781 365h28v162h-28z" /><path stroke="#fbc48a" strokeWidth="8" d="M662 420l46-43 44 62 60-60" />
    </Thumb>) },
  { state: "off", art: (
    <Thumb x={-60} y={600}>
      <path stroke="#8fc9b1" strokeWidth="5" d="M106 642h47M129 618v47M85 699h47M109 676v47M163 730h48M187 707v47M106 762h47M129 739v46M20 767h39" />
      <g stroke="#fdcb93" strokeWidth="7"><circle cx="59" cy="665" r="18" /><circle cx="168" cy="676" r="18" /><circle cx="74" cy="738" r="18" /></g>
    </Thumb>) },
  { state: "off", art: (
    <Thumb x={270} y={600}>
      <path fill="#90c9b2" d="M305 786h21v15h-21zM331 760h21v41h-21zM358 712h20v89h-20zM384 660h21v141h-21zM410 640h21v161h-21zM436 660h21v141h-21zM463 712h20v89h-20zM489 760h21v41h-21zM515 786h21v15h-21z" />
    </Thumb>) },
  { state: "on", art: (
    <Thumb x={600} y={600}>
      <path fill="#afe1c5" d="M640 697h36v22h-36zM703 670h36v47h-36zM766 686h36v43h-36z" /><path fill="#75bb9f" d="M640 718h36v41h-36zM703 716h36v28h-36zM766 728h36v42h-36z" />
      <path stroke="#555" strokeWidth="5" d="M658 658v120M645 658h26M645 778h26M721 647v141M708 647h26M708 788h26M784 642v152M771 642h26M771 794h26" />
    </Thumb>) },
  { state: "off", art: (
    <Thumb x={-60} y={876}>
      <path fill="#f6b478" d="M48 900h21v42H48zM132 900h11v42h-11zM174 964h42v42h-42zM20 1033h33v42H20z" /><path fill="#fed3ab" d="M75 900h21v42H75zM163 900h43v42h-43zM184 1033h22v42h-22z" />
      <path fill="#90c9b2" d="M20 964h39v42H20zM116 1033h38v42h-38z" /><path fill="#c1e8d2" d="M75 964h73v42H75zM64 1033h21v42H64z" />
    </Thumb>) },
  { state: "off", art: (
    <Thumb x={270} y={876}>
      <path fill="#f7f8fa" d="M300 906h241v42H300zM300 970h241v41H300zM300 1033h241v42H300z" /><path fill="#efefef" d="M300 906h210v42H300zM300 970h210v41H300zM300 1033h131v42H300z" /><path fill="#e6e6e6" d="M300 906h135v42H300zM300 970h105v41H300zM300 1033h110v42H300z" />
      <path fill="#90c9b2" d="M300 916h131v21H300zM300 980h210v21H300zM300 1043h110v21H300z" /><path stroke="#808080" strokeWidth="5" d="M449 905v43M486 969v42M517 1032v43" />
    </Thumb>) },
  { state: "on", art: (
    <Thumb x={600} y={876}>
      <g fill="#75bb9f"><circle cx="689" cy="951" r="18" /><circle cx="740" cy="938" r="27" /><circle cx="761" cy="1054" r="22" /></g>
      <circle cx="684" cy="1025" r="50" fill="#afe1c5" /><circle cx="790" cy="943" r="16" fill="#afe1c5" /><circle cx="764" cy="995" r="30" fill="#ffc990" /><circle cx="806" cy="1024" r="14" fill="#ffc990" />
    </Thumb>) },
];

const ExtensionArt = () => (
  <Thumb x={69} y={1155}>
    <circle cx="256" cy="1233" r="34" stroke="#27ae87" strokeWidth="26" /><path d="M267 1201a34 34 0 0 1 20 46" stroke="#ffa55c" strokeWidth="26" />
    <path fill="#b5dff4" d="M132 1227c45 0 55 60 95 70v20h-95z" /><path fill="#79abcc" d="M134 1262c45 10 45-35 95-33v70c-30 0-40 20-60 20h-35z" />
    <path stroke="#fff" strokeWidth="4" d="M134 1282c45 6 55-34 95-34M134 1290c25 0 40-8 52-20" /><path fill="#5fa0c9" d="M165 1285l30-30 35 45-15 20h-45z" />
    <path fill="#9ad4f2" d="M108 1227h24v33h-24z" /><path fill="#3f89ae" d="M108 1260h24v80h-24z" /><path fill="#f05659" d="M228 1227h24v21h-24z" /><path fill="#ffa29b" d="M228 1248h24v80h-24z" />
  </Thumb>
);

/* ---------- Taskbar drawings ---------- */

const WeatherArt = () => (
  <svg width="36" height="40" viewBox="0 0 36 40">
    <defs><linearGradient id="cloud" x1="0" y1="0" x2="0" y2="1"><stop offset="0" stopColor="#cfe0fb" /><stop offset="1" stopColor="#7f9fe0" /></linearGradient></defs>
    <circle cx="24" cy="21" r="7" fill="#f78f1e" />
    <path fill="url(#cloud)" d="M8 36a6 6 0 0 1-1-12 8 8 0 0 1 15-4 7 7 0 0 1 5 5 5.6 5.6 0 0 1-1 11z" />
    <circle cx="25.500" cy="10" r="10" fill="#c42b1c" />
    <text x="25.500" y="15" fill="#fff" fontSize="13" textAnchor="middle" fontFamily="Open Sans">7</text>
  </svg>
);
const StartArt = () => (
  <svg width="30" height="30" viewBox="0 0 30 30">
    <defs><linearGradient id="win" x1="0" y1="0" x2="1" y2="1"><stop offset="0" stopColor="#4fd0ff" /><stop offset="1" stopColor="#0067c8" /></linearGradient></defs>
    <path fill="url(#win)" d="M1.500.5h12.700v13.700H.5V1.500zM15.300.5h13.200l1 1v12.700H15.300zM.5 15.300h13.700v14.200H1.500l-1-1zM15.300 15.300h14.200v13.200l-1 1H15.300z" />
  </svg>
);
const HatterArt = () => (
  <svg width="56" height="32" viewBox="0 0 56 32">
    <path fill="#f5941f" d="M0 16c0-2 2-2.500 3.500-1L5 18c0-1 1-3 3.500-3.300 2-.2 3.500 1 4 2.500l1-2.500 2.700.3-1.700 4c.5 6-1.500 10.500-3 11.500H4.500C3 29.500 1.500 26 1.500 22 .8 20 0 18 0 16z" /><circle cx="8.500" cy="14" r="1.500" fill="#e07a10" /><path d="M4.500 20c-.5 4 0 6 1.500 8" stroke="#ffc56e" strokeWidth="1.500" fill="none" />
    <path fill="#5a3fb0" d="M18 31l2-8 5-2h6l5 2 2 8z" /><path fill="#d67a3c" d="M20 11h4l-1 8-3-2zM32 11h4l-.5 6-3 2z" /><path fill="#f5c9a4" d="M22.500 11h11l-1 8-4.500 3.500-4.500-3.500z" />
    <path fill="#4fae84" d="M20.500 1.500c5-2 10-2 15 0L33.500 8h-11z" /><path fill="#e8b13a" d="M22 6.500h12l-.5 3h-11z" /><path fill="#3c8f68" d="M18 7.500c6 3 14 3 20 0l-1.500 3.500c-5 1.500-12 1.500-17 0z" />
    <circle cx="25.500" cy="15" r="1" fill="#333" /><circle cx="30.500" cy="15" r="1" fill="#333" /><path fill="#42a5e8" d="M23.500 21l4.500 2 4.500-2-1 4.500h-7z" /><circle cx="28" cy="28" r="3.800" fill="#f0608e" />
    <path fill="#3aa0d8" d="M38.500 20c1-1 2-.6 2.500.6 1-1.600 3-2.600 5-2.600 3 0 5 1.500 6 4l2.500-1.500 1 .8-3 3.700c-.5 3-2 5-3.500 6.500h-6c-3-1.500-3.800-4-3.700-6-1-1.500-1.500-3.500-.8-5.500z" /><circle cx="46" cy="17.500" r="1.600" fill="#2780b8" /><path d="M43 22.500c-1.500 2-1 4 0 6" stroke="#8fd6f5" strokeWidth="1.400" fill="none" />
  </svg>
);
const TaskViewArt = () => (
  <svg width="30" height="29" viewBox="0 0 30 29"><path fill="#2c2b29" d="M0 9h22v19.500H0z" /><path fill="#f3f2f1" d="M8 1h22v19H8z" /><path fill="#c3c2c0" d="M8 9h14v11H8z" /></svg>
);
const CopilotArt = () => (
  <svg width="30" height="28" viewBox="0 0 30 28">
    <defs>
      <linearGradient id="cpa" x1="0" y1="0" x2="0" y2="1"><stop offset="0" stopColor="#1b9cf0" /><stop offset=".5" stopColor="#3cb98a" /><stop offset="1" stopColor="#f0c22c" /></linearGradient>
      <linearGradient id="cpb" x1="0" y1="0" x2="0" y2="1"><stop offset="0" stopColor="#9a4df0" /><stop offset=".5" stopColor="#ea5bb0" /><stop offset="1" stopColor="#ff9a55" /></linearGradient>
    </defs>
    <path fill="#1f50c8" d="M14 1h5c3 0 4 2 5 7l-6 1z" /><path fill="url(#cpa)" d="M9 1h9c-3 1-4 5-6 12-1 4-2 6-5 6H4c-4 0-4-4-3-8 2-7 3-10 8-10z" />
    <path fill="#f06a3c" d="M7 19h9l-3 7c-4 1-5-2-6-7z" /><path fill="url(#cpb)" d="M21 27h-9c3-1 4-5 6-12 1-4 2-6 5-6h3c4 0 4 4 3 8-2 7-3 10-8 10z" />
  </svg>
);
const TeamsArt = () => (
  <svg width="30" height="28" viewBox="0 0 30 28">
    <circle cx="16" cy="5" r="4.700" fill="#7b83eb" /><circle cx="25" cy="6.500" r="3.200" fill="#5059c9" /><path fill="#5059c9" d="M21 11h9v8c0 4-5 6-8 3z" /><path fill="#7b83eb" d="M8 11h15v9c0 9-15 9-15 0z" />
    <rect y="6" width="15" height="16" rx="1.500" fill="#4b53bc" /><text x="7.500" y="18.500" fill="#fff" fontSize="12" fontWeight="700" textAnchor="middle" fontFamily="Open Sans">T</text>
  </svg>
);
const StoreArt = () => (
  <svg width="30" height="30" viewBox="0 0 30 30">
    <defs><linearGradient id="store" x1="0" y1="0" x2="0" y2="1"><stop offset="0" stopColor="#0f63b4" /><stop offset="1" stopColor="#1e3766" /></linearGradient></defs>
    <path d="M8.500 6V1.800H21V6" fill="none" stroke="#30b8ee" strokeWidth="2" /><path fill="url(#store)" d="M.5 5h29v20a4 4 0 0 1-4 4.500h-21a4 4 0 0 1-4-4.500z" />
    <path fill="#f25022" d="M9.500 12h5v5h-5z" /><path fill="#7fba00" d="M15.500 12h5v5h-5z" /><path fill="#00a4ef" d="M9.500 18h5v5h-5z" /><path fill="#ffb900" d="M15.500 18h5v5h-5z" />
  </svg>
);
const FirefoxArt = () => (
  <svg width="30" height="30" viewBox="0 0 30 30">
    <defs><linearGradient id="fox" x1=".8" y1="0" x2=".2" y2="1"><stop offset="0" stopColor="#ffe23c" /><stop offset=".5" stopColor="#ff7a2a" /><stop offset="1" stopColor="#f0206c" /></linearGradient></defs>
    <path fill="url(#fox)" d="M4 7s2 1 3 2l3-3v3c3-1 5 0 6 1 0-4 1-7 3-9 1 3 6 5 8 9 1-1 0-2 0-2 6 11-1 21-12 21C2 29-2 17 4 7z" /><circle cx="15" cy="15.500" r="5.800" fill="#7b3fd6" />
    <path fill="#ff9430" d="M6 10c3-2 7-1 9 1-2 2-5 1-6 4 1 5 8 6 12 2-2 7-12 8-15 2-1-3-1-6 0-9z" />
  </svg>
);
const HelpArt = () => (
  <svg width="40" height="36" viewBox="0 0 40 36">
    <circle cx="17" cy="20.500" r="13.700" fill="#0096d6" stroke="#fff" strokeWidth="1.500" />
    <path d="M12.500 17c0-6 9.500-6 9.500-.8 0 3.300-4.500 3.300-4.500 7" fill="none" stroke="#fff" strokeWidth="3.600" /><circle cx="17.500" cy="28" r="2.300" fill="#fff" /><circle cx="29" cy="10" r="10" fill="#fdc010" />
  </svg>
);
const FolderArt = () => (
  <svg width="30" height="27" viewBox="0 0 30 27">
    <path fill="#dba30f" d="M0 2A1.500 1.500 0 0 1 1.500.5h9L13 3h17v5H0z" /><path fill="#fcd25a" d="M0 6h11l2-2.500h16l1 1V27H0z" /><path fill="#fbc62f" d="M0 17h30v10H0z" /><path fill="#1272c4" d="M5 22a3 3 0 0 1 3-3h14a3 3 0 0 1 3 3v5H5z" /><path fill="#0a539b" d="M8 22.300h14v1.200H8z" />
  </svg>
);
const EdgeArt = () => (
  <svg width="31" height="30" viewBox="0 0 31 30">
    <defs><linearGradient id="edge" x1="0" y1=".3" x2="1" y2=".5"><stop offset="0" stopColor="#1c86d6" /><stop offset=".5" stopColor="#2fc2d8" /><stop offset="1" stopColor="#6fdc5a" /></linearGradient></defs>
    <path fill="#1a6fc4" d="M1 13s3-5 10-4c2 0 5 2 6 5-4 0-5 4-3 8 2 4 8 4 12 2-6 9-24 7-25-8z" /><path fill="#134a97" d="M13 20c2 6 10 6 15 3-2 5-8 8-14 6-3-2-3-6-1-9z" /><path fill="url(#edge)" d="M1 14C2 5 8 .5 15.500.5 24 .5 31 6 31 13c0 5-4 7-8 7-3 0-5-1-4-3 1-3-1-8-8-8C6 9 2 11 1 14z" />
    <circle cx="7" cy="23" r="6.500" fill="#b8b8b8" /><circle cx="7" cy="21" r="2.700" fill="#6e6e6e" /><path fill="#6e6e6e" d="M2.500 27c1-4 8-4 9 0-2 3-7 3-9 0z" />
  </svg>
);
const WhatsAppArt = () => (
  <svg width="31" height="31" viewBox="0 0 31 31">
    <path d="M2.200 28.800l2-7A13.300 13.300 0 1 1 9 26.800z" fill="none" stroke="#148a52" strokeWidth="3" /><path fill="#148a52" d="M10 8.500c1-1.500 3-1.500 3.500 0l1 2.500c.3 1-1.500 2-1 3 1 2 2.500 3.500 4.500 4.300 1 .4 2-1.700 3-1.200l2.500 1.300c1 .6 0 3-1.500 3.600-5 2-14-6.500-12-13.500z" />
  </svg>
);
const WifiArt = () => (
  <Line s={21} w={1.6} v="0 0 21 21"><path d="M1 8.500a13.500 13.500 0 0 1 19 0M4 11.500a9.300 9.300 0 0 1 13 0M7 14.500a5 5 0 0 1 7 0" /><circle cx="10.500" cy="17" r="1.500" fill="currentColor" stroke="none" /></Line>
);
const VolumeArt = () => (
  <Line s={20} w={1.4} v="0 0 20 20"><path d="M1 7.500h3.300L8.500 4v12.500L4.300 13H1zM11 8c1.200 1.500 1.200 3.500 0 5M13.500 6c2.200 2.500 2.200 6.500 0 9" /><path d="M16 4c3.300 4 3.300 9 0 13" stroke="#c9bba4" /></Line>
);
const BatteryArt = () => (
  <Line s={21} w={1.5} v="0 0 21 21"><rect x="1" y="5" width="17" height="11.500" rx="2.500" /><rect x="3.300" y="7.300" width="11.500" height="7" rx="1" fill="currentColor" stroke="none" /><path d="M19.500 9v3.500" strokeWidth="2.200" /></Line>
);
const BellArt = () => (
  <Line s={20} w={1.5} v="0 0 20 20"><path d="M10 3C6 3 4 5.500 4 9v4l-2 3h15l-2-3v-1M7.500 17.500c1 2 3.500 2 4.500 0" /><path d="M7.500 7.500h4l-4 5h4M13.500 2H17l-3.500 4.500H17" /></Line>
);

/* ---------- Data ---------- */

type Kind = "abc" | "geo" | "date" | "num" | "measure" | "tree";
const fields: { name: string; kind: Kind; nested?: boolean; italic?: boolean }[] = [
  { name: "Category", kind: "abc" },
  { name: "Country, State, City", kind: "tree" },
  { name: "Country", kind: "geo", nested: true },
  { name: "State", kind: "geo", nested: true },
  { name: "City", kind: "geo", nested: true },
  { name: "Customer.ID", kind: "abc" },
  { name: "Customer.Name", kind: "abc" },
  { name: "Market", kind: "abc" },
  { name: "Market2", kind: "abc" },
  { name: "Order.Date", kind: "date" },
  { name: "Order.ID", kind: "abc" },
  { name: "Order.Priority", kind: "abc" },
  { name: "Product.ID", kind: "abc" },
  { name: "Product.Name", kind: "abc" },
  { name: "Region", kind: "abc" },
  { name: "Row.ID", kind: "num" },
  { name: "Segment", kind: "abc" },
  { name: "Ship.Date", kind: "date" },
  { name: "Ship.Mode", kind: "abc" },
  { name: "Sub.Category", kind: "abc" },
  { name: "Year", kind: "measure" },
  { name: "Measure Names", kind: "abc", italic: true },
];
const measures = ["Discount", "Profit", "Quantity", "Sales", "Shipping.Cost"];

const kindIcon: Record<Kind, React.ReactNode> = {
  abc: "Abc",
  geo: <GlobeIcon />,
  date: <CalendarIcon />,
  num: <HashIcon />,
  measure: <HashIcon />,
  tree: <TreeIcon />,
};

const Field = ({ name, kind, nested, italic }: (typeof fields)[number]) => (
  <FieldRow $nested={nested} $italic={italic}>
    <Expander>{kind === "tree" && <Line s={11} w={1.3} v="0 0 12 12"><path d="M2 3.500l4 4 4-4" /></Line>}</Expander>
    <FieldIcon $measure={kind === "measure"}>{kindIcon[kind]}</FieldIcon>
    {name}
  </FieldRow>
);

const menus: [string, number][] = [["File", 39], ["Data", 48], ["Worksheet", 85], ["Dashboard", 89], ["Story", 50], ["Analysis", 69], ["Map", 46], ["Format", 63], ["Server", 57], ["Window", 71], ["Help", 40]];

const marks: [string, React.ReactNode][] = [
  ["Color", <ColorDots size={18} />], ["Size", <SizeGlyph size={18} />], ["Label", <LabelGlyph />],
  ["Detail", <DetailGlyph />], ["Tooltip", <TooltipGlyph />], ["Angle", <AngleGlyph size={18} />],
];

export default function App() {
  return (
    <Screen>
      <GlobalStyle />
      <TitleBar>
        <AppBadge><TableauMark size={15} /></AppBadge>
        Tableau - Book1 - Tableau license expires tomorrow
        <WindowButtons>
          <Line s={26} w={1.3} v="0 0 26 26"><path d="M7 13.500h12" /></Line>
          <Line s={24} w={1.3}><rect x="5" y="8" width="9" height="9" rx="2" /><path d="M8 6h6a3 3 0 0 1 3 3v6" /></Line>
          <Line s={24} w={1.3}><path d="M6 7l11.500 11.500M17.500 7L6 18.500" /></Line>
        </WindowButtons>
      </TitleBar>
      <MenuBar>{menus.map(([m, w]) => <MenuItem key={m} $w={w}>{m}</MenuItem>)}</MenuBar>

      <ToolBar>
        <Tool $ml={16}><HomeIcon /></Tool>
        <ToolDivider $ml={16} />
        <Tool $ml={14}><BackIcon /></Tool>
        <Tool $ml={15} $muted><ForwardIcon /></Tool>
        <Tool $ml={13} $muted><ReplayIcon /></Tool>
        <Caret $ml={8} $muted />
        <Tool $ml={10}><SaveIcon /></Tool>
        <Tool $ml={15}><AddDataIcon /></Tool>
        <Tool $ml={14}><PauseDataIcon /></Tool>
        <Caret $ml={7} />
        <Tool $ml={7} $muted><RefreshIcon /></Tool>
        <Caret $ml={9} $muted />
        <ToolDivider $ml={11} />
        <Tool $ml={12}><NewSheetIcon /></Tool>
        <Caret $ml={8} />
        <Tool $ml={10}><DuplicateIcon /></Tool>
        <Tool $ml={14}><ClearIcon /></Tool>
        <Caret $ml={7} />
        <ToolDivider $ml={11} />
        <Tool $ml={13} $muted><SwapIcon /></Tool>
        <Tool $ml={17}><SortAscIcon /></Tool>
        <Tool $ml={14}><SortDescIcon /></Tool>
        <ToolDivider $ml={16} />
        <Tool $ml={14}><HighlightIcon /></Tool>
        <Caret $ml={5} />
        <Tool $ml={9} $muted><ClipIcon /></Tool>
        <Caret $ml={8} $muted />
        <Tool $ml={12} $muted><TextBoxIcon /></Tool>
        <Tool $ml={12} $muted><PinIcon /></Tool>
        <FitSelect>Standard<SelectArrow $w={22}><Caret /></SelectArrow></FitSelect>
        <ToolDivider $ml={17} />
        <Tool $ml={14}><CardsIcon /></Tool>
        <Caret $ml={5} />
        <Tool $ml={12}><PresentIcon /></Tool>
        <ToolDivider $ml={16} />
        <Tool $ml={14}><ShareIcon /></Tool>
        <ToolSpacer />
        <Tool $ml={0} $muted><GuideIcon /></Tool>
        <Tool $ml={15}><SignIcon /></Tool>
      </ToolBar>

      <Work>
        <DataPane>
          <PaneTabs>
            <DataTab>Data</DataTab>
            <AnalyticsTab>Analytics<Line s={10} w={1.2} v="0 0 10 10"><path d="M7 .5L3.500 5 7 9.500" /></Line></AnalyticsTab>
          </PaneTabs>
          <SourceRow><SourceIcon />superstore</SourceRow>
          <SearchRow>
            <SearchField>Search<Magnifier /></SearchField>
            <SearchTools><FunnelIcon /><ThinRule /><ListIcon /><Caret $big /></SearchTools>
          </SearchRow>
          <TablesTitle>Tables</TablesTitle>
          <ListArea>
            <FieldList>
              {fields.map((f) => <Field key={f.name} {...f} />)}
              <FieldRule />
              {measures.map((m) => <Field key={m} name={m} kind="measure" />)}
            </FieldList>
            <ScrollTrack><ScrollThumb /></ScrollTrack>
          </ListArea>
        </DataPane>

        <CardColumn>
          <Card $h={70}><CardTitle>Pages</CardTitle></Card>
          <Card $h={92}><CardTitle>Filters</CardTitle></Card>
          <Card $h={322}>
            <CardTitle>Marks</CardTitle>
            <MarkSelect><PieGlyph />Pie<SelectArrow $w={22}><Caret /></SelectArrow></MarkSelect>
            <MarkGrid>{marks.map(([m, icon]) => <MarkButton key={m}>{icon}{m}</MarkButton>)}</MarkGrid>
            <PillList>
              <PillRow><ColorDots size={15} /><Pill>Category</Pill></PillRow>
              <PillRow><AngleGlyph size={15} /><Pill $measure>SUM(Sales)</Pill></PillRow>
              <PillRow><SizeGlyph size={15} /><Pill $measure>SUM(Sales)</Pill></PillRow>
            </PillList>
          </Card>
        </CardColumn>

        <SheetColumn>
          <Shelf>
            <ShelfLabel>
              <Line s={12} w={2} v="0 0 12 12"><path d="M2 0v2M6 0v2M10 0v2M2 3.500V12M6 3.500V12M10 3.500V12" /></Line>Columns
            </ShelfLabel>
          </Shelf>
          <Shelf>
            <ShelfLabel>
              <Line s={12} w={2} v="0 0 12 12"><path d="M0 2h2M0 6h2M0 10h2M3.500 2H12M3.500 6H12M3.500 10H12" /></Line>Rows
            </ShelfLabel>
          </Shelf>
          <Canvas>
            <SheetTitle>&lt;Sales by Category&gt;</SheetTitle>
            <PieHolder>
              <svg width="80" height="80" viewBox="0 0 80 80">
                <path fill="#4e79a7" d="M40 40V0A40 40 0 0 1 75.800 57.900z" />
                <path fill="#f28e2b" d="M40 40L75.800 57.900A40 40 0 0 1 12.100 68.600z" />
                <path fill="#e15759" d="M40 40L12.100 68.600A40 40 0 0 1 40 0z" />
              </svg>
            </PieHolder>
          </Canvas>
          <Caption>
            Caption
            <CaptionText>This donut chart shows how each product category contributes to total sales. Technology leads with the highest share.</CaptionText>
          </Caption>
        </SheetColumn>
      </Work>

      <ShowMe>
        <ShowMeTab><ShowMeBars />Show Me</ShowMeTab>
        <ShowMeBody>
          <ShowMeView>
            <TileGrid>{thumbs.map((t, i) => <Tile key={i} $state={t.state}>{t.art}</Tile>)}</TileGrid>
            <MoreTile $state="off"><ExtensionArt /></MoreTile>
          </ShowMeView>
        </ShowMeBody>
      </ShowMe>

      <SheetTabs>
        <SheetTab $w={163} $pad={10}>
          <Line s={9} h={12} w={1.2} v="0 0 9 12"><ellipse cx="4.500" cy="2.800" rx="3.800" ry="1.900" /><path d="M.7 2.800v6.700c0 2 7.600 2 7.600 0V2.800" /></Line>Data Source
        </SheetTab>
        <SheetTab $w={72} $pad={7}>Sheet 1</SheetTab>
        <SheetTab $w={71}>Sheet 2</SheetTab>
        <SheetTab $w={71} $active>Sheet 3</SheetTab>
        <SheetTab $w={125} $pad={8}>
          <Line s={11} w={1.2} v="0 0 11 11"><path d="M.6.6h9.800v9.800H.6zM5.500.6v9.800M.6 5.500h9.800" /></Line>Dashboard 1
        </SheetTab>
        <SheetTab $w={71}>Sheet 4</SheetTab>
        <SheetTab $w={32} $pad={8}>
          <Line s={17} w={1.2} v="0 0 17 17"><path d="M12 8V1.500H1.500v11H8M4.500 10V7M6.800 10V5M9 8V6" /><path d="M12.500 8.500v7M9 12h7" strokeWidth="2" /></Line>
        </SheetTab>
        <SheetTab $w={32} $pad={8}>
          <Line s={17} w={1.2} v="0 0 17 17"><path d="M12 8V1.500H1.500v11H8M6.700 1.500v11M1.500 7H12" /><path d="M12.500 8.500v7M9 12h7" strokeWidth="2" /></Line>
        </SheetTab>
        <SheetTab $w={32} $pad={8}>
          <Line s={17} w={1.2} v="0 0 17 17"><path d="M12 8V1.500L7 3.500l-5-2v10l5 2V3.500" /><path d="M12.500 8.500v7M9 12h7" strokeWidth="2" /></Line>
        </SheetTab>
      </SheetTabs>

      <StatusBar>
        <StatusItem $w={70}>3 marks</StatusItem>
        <StatusItem $w={130}>1 row by 1 column</StatusItem>
        <StatusItem $w={160} $wide>SUM(Sales): 12,642,905</StatusItem>
        <StatusCells>
          <StatusCell $w={157} /><StatusCell $w={32} /><StatusCell $w={32} /><StatusCell $w={57} />
          <StatusCell $w={71}>
            <svg width="7" height="8" viewBox="0 0 7 8" fill="currentColor"><path d="M0 0h1.300v8H0zM6.500 0v8L2 4z" /></svg>
            <svg width="5" height="8" viewBox="0 0 5 8" fill="currentColor"><path d="M4.500 0v8L0 4z" /></svg>
            <svg width="5" height="8" viewBox="0 0 5 8" fill="currentColor"><path d="M.5 0v8L5 4z" /></svg>
            <svg width="7" height="8" viewBox="0 0 7 8" fill="currentColor"><path d="M5.700 0H7v8H5.700zM.5 0v8L5 4z" /></svg>
          </StatusCell>
          <ViewModes $w={70}>
            <svg width="11" height="11" viewBox="0 0 11 11" fill="currentColor"><path d="M0 0h3v3H0zM4 0h3v3H4zM8 0h3v3H8zM0 4h3v3H0zM4 4h3v3H4zM8 4h3v3H8zM0 8h3v3H0zM4 8h3v3H4zM8 8h3v3H8z" /></svg>
            <svg width="11" height="11" viewBox="0 0 11 11" fill="currentColor"><path d="M0 0h11v7H0zM0 8h3v3H0zM4 8h3v3H4zM8 8h3v3H8z" /></svg>
            <svg width="11" height="11" viewBox="0 0 11 11" fill="#666"><rect width="11" height="11" rx="1" /></svg>
          </ViewModes>
        </StatusCells>
      </StatusBar>

      <Taskbar>
        <Weather><WeatherArt /><div><div>32°C</div><Muted>Mostly cloudy</Muted></div></Weather>
        <StartArt />
        <TaskSearch>
          <svg width="19" height="20" viewBox="0 0 19 20" fill="none" stroke="#222"><circle cx="8" cy="8" r="7" strokeWidth="2" /><path d="M13 13.500l5 5" strokeWidth="2.600" /></svg>
          <SearchWord>Search</SearchWord>
          <HatterArt />
        </TaskSearch>
        <Apps>
          <TaskCell><TaskViewArt /></TaskCell>
          <TaskCell><CopilotArt /></TaskCell>
          <TaskCell><TeamsArt /></TaskCell>
          <TaskCell><StoreArt /></TaskCell>
          <TaskCell><HpPlate>my<i>hp</i></HpPlate></TaskCell>
          <TaskCell><FirefoxArt /></TaskCell>
          <TaskCell><HelpArt /></TaskCell>
          <TaskCell><FolderArt /></TaskCell>
          <TaskCell $mark="idle"><EdgeArt /><RunMark /></TaskCell>
          <TaskCell $mark="active"><ActivePlate><LogoPlate><TableauMark size={24} /></LogoPlate><RunMark $active /></ActivePlate></TaskCell>
          <TaskCell $mark="idle"><WhatsAppArt /><RunMark /></TaskCell>
        </Apps>
        <Tray>
          <Line s={16} w={1.8} v="0 0 16 16"><path d="M1.500 11L8 4.500l6.500 6.500" /></Line>
          <Language>ENG<br />IN</Language>
          <TrayIcons><WifiArt /><VolumeArt /><BatteryArt /></TrayIcons>
          <Clock>15:28<br />04-07-2025</Clock>
          <BellArt />
        </Tray>
      </Taskbar>
    </Screen>
  );
}
